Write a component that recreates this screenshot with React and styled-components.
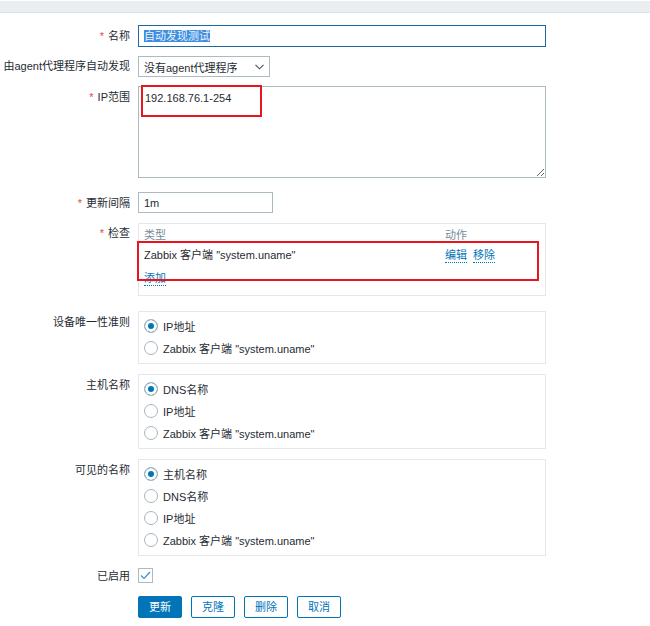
import React from "react";
import styled, { createGlobalStyle } from "styled-components";

const GlobalStyle = createGlobalStyle`
  html, body { margin: 0; padding: 0; background: #fff; }
  body {
    font-family: "Liberation Sans", Arial, "Noto Sans CJK SC", sans-serif;
    font-size: 11px;
    color: #1f2c33;
  }
  * { box-sizing: border-box; }
`;

const Page = styled.div`
  width: 650px;
  height: 626px;
  overflow: hidden;
`;

const TopBar = styled.div`
  height: 12px;
  margin-top: 1px;
  background: #ebeef0;
  border-bottom: 1px solid #dce1e4;
`;

const Form = styled.div`
  padding-top: 12px;
  display: flex;
  flex-direction: column;
`;

const Row = styled.div`
  display: grid;
  grid-template-columns: 130px 408px;
  column-gap: 8px;
  margin-bottom: ${(p) => p.$after || 0}px;
`;

const Label = styled.div`
  text-align: right;
  line-height: 14px;
  padding-top: ${(p) => (p.$pt !== undefined ? p.$pt : 4)}px;
  white-space: nowrap;
`;

const Req = styled.span`
  color: #e0494b;
  margin-right: 4px;
`;

const Field = styled.div`
  position: relative;
`;

const NameBox = styled.div`
  height: 22px;
  border: 1px solid #1c67a8;
  padding: 0 5px;
  display: flex;
  align-items: center;
`;

const Selected = styled.span`
  background: #3d8ee0;
  color: #eaf2ff;
  line-height: 12px;
  display: inline-block;
`;

const Select = styled.div`
  width: 132px;
  height: 21px;
  border: 1px solid #acbbc2;
  padding: 0 5px 0 5px;
  display: flex;
  align-items: center;
  justify-content: space-between;
  background: #fff;
`;

const TextArea = styled.textarea`
  display: block;
  width: 408px;
  height: 92px;
  border: 1px solid #acbbc2;
  padding: 4px 6px;
  margin: 0;
  font-family: "Liberation Sans", Arial, "Noto Sans CJK SC", sans-serif;
  font-size: 11px;
  line-height: 14px;
  color: #1f2c33;
  resize: both;
  outline: none;
`;

const TextInput = styled.div`
  width: 135px;
  height: 21px;
  border: 1px solid #acbbc2;
  padding: 0 5px;
  display: flex;
  align-items: center;
`;

const Mark = styled.div`
  position: absolute;
  border: 2px solid #e8141e;
  pointer-events: none;
`;

const Box = styled.div`
  border: 1px solid #e5e7ea;
  padding: ${(p) => p.$pad || "3px 5px 4px 5px"};
`;

const TableGrid = styled.div`
  display: grid;
  grid-template-columns: 301px 1fr;
  line-height: 14px;
  padding: ${(p) => p.$pad || "0"};
  color: ${(p) => (p.$head ? "#768d99" : "#1f2c33")};
`;

const Actions = styled.div`
  display: flex;
  gap: 6px;
`;

const Link = styled.span`
  color: #0275b8;
  border-bottom: 1px dotted #0275b8;
  line-height: 14px;
  display: inline-block;
`;

const AddRow = styled.div`
  padding-top: 2px;
`;

const RadioItem = styled.div`
  height: 22px;
  display: flex;
  align-items: center;
  gap: 5px;
`;

const RadioCircle = styled.span`
  width: 14px;
  height: 14px;
  border-radius: 50%;
  border: 1px solid #a9b6bd;
  background: ${(p) => (p.$on ? "#0275b8" : "#fff")};
  box-shadow: ${(p) => (p.$on ? "inset 0 0 0 3px #fff" : "none")};
  flex: none;
`;

const CheckBox = styled.span`
  width: 15px;
  height: 15px;
  border: 1px solid #acbbc2;
  display: flex;
  align-items: center;
  justify-content: center;
  background: #fff;
`;

const Buttons = styled.div`
  display: flex;
  gap: 9px;
`;

const Button = styled.button`
  height: 22px;
  padding: 0 10px;
  border: 1px solid #0275b8;
  border-radius: 2px;
  background: ${(p) => (p.$primary ? "#0275b8" : "#fff")};
  color: ${(p) => (p.$primary ? "#fff" : "#0275b8")};
  font-family: "Liberation Sans", Arial, "Noto Sans CJK SC", sans-serif;
  font-size: 11px;
  line-height: 20px;
  cursor: pointer;
`;

function Radios({ items, selected }) {
  return items.map((t, i) => (
    <RadioItem key={t}>
      <RadioCircle $on={i === selected} />
      <span>{t}</span>
    </RadioItem>
  ));
}

const ZBX = 'Zabbix 客户端 "system.uname"';

export default function App() {
  return (
    <Page>
      <GlobalStyle />
      <TopBar />
      <Form>
        <Row $after={9}>
          <Label><Req>*</Req>名称</Label>
          <Field>
            <NameBox><Selected>自动发现测试</Selected></NameBox>
          </Field>
        </Row>
        <Row $after={9}>
          <Label $pt={3}>由agent代理程序自动发现</Label>
          <Field>
            <Select>
              <span>没有agent代理程序</span>
              <svg width="9" height="6" viewBox="0 0 9 6">
                <polyline points="0.5,0.8 4.5,4.8 8.5,0.8" fill="none" stroke="#4a4f52" strokeWidth="1.1" />
              </svg>
            </Select>
          </Field>
        </Row>
        <Row $after={14}>
          <Label><Req>*</Req>IP范围</Label>
          <Field>
            <TextArea defaultValue="192.168.76.1-254" readOnly />
            <Mark style={{ left: 3, top: -1, width: 121, height: 32 }} />
          </Field>
        </Row>
        <Row $after={10}>
          <Label><Req>*</Req>更新间隔</Label>
          <Field>
            <TextInput>1m</TextInput>
          </Field>
        </Row>
        <Row $after={15}>
          <Label $pt={3}><Req>*</Req>检查</Label>
          <Field>
            <Box $pad="4px 5px 9px 5px">
              <TableGrid $head>
                <span>类型</span>
                <span>动作</span>
              </TableGrid>
              <TableGrid $pad="6px 0">
                <span>{ZBX}</span>
                <Actions>
                  <Link>编辑</Link>
                  <Link>移除</Link>
                </Actions>
              </TableGrid>
              <AddRow><Link>添加</Link></AddRow>
            </Box>
            <Mark style={{ left: -1, top: 18, width: 402, height: 40 }} />
          </Field>
        </Row>
        <Row $after={10}>
          <Label>设备唯一性准则</Label>
          <Field>
            <Box>
              <Radios items={["IP地址", ZBX]} selected={0} />
            </Box>
          </Field>
        </Row>
        <Row $after={10}>
          <Label>主机名称</Label>
          <Field>
            <Box>
              <Radios items={["DNS名称", "IP地址", ZBX]} selected={0} />
            </Box>
          </Field>
        </Row>
        <Row $after={12}>
          <Label>可见的名称</Label>
          <Field>
            <Box>
              <Radios items={["主机名称", "DNS名称", "IP地址", ZBX]} selected={0} />
            </Box>
          </Field>
        </Row>
        <Row $after={13}>
          <Label $pt={1}>已启用</Label>
          <Field>
            <CheckBox>
              <svg width="11" height="9" viewBox="0 0 11 9">
                <polyline points="1,4.5 4,7.5 10,1" fill="none" stroke="#3a8fc9" strokeWidth="1.2" />
              </svg>
            </CheckBox>
          </Field>
        </Row>
        <Row>
          <Label />
          <Field>
            <Buttons>
              <Button $primary>更新</Button>
              <Button>克隆</Button>
              <Button>删除</Button>
              <Button>取消</Button>
            </Buttons>
          </Field>
        </Row>
      </Form>
    </Page>
  );
}
